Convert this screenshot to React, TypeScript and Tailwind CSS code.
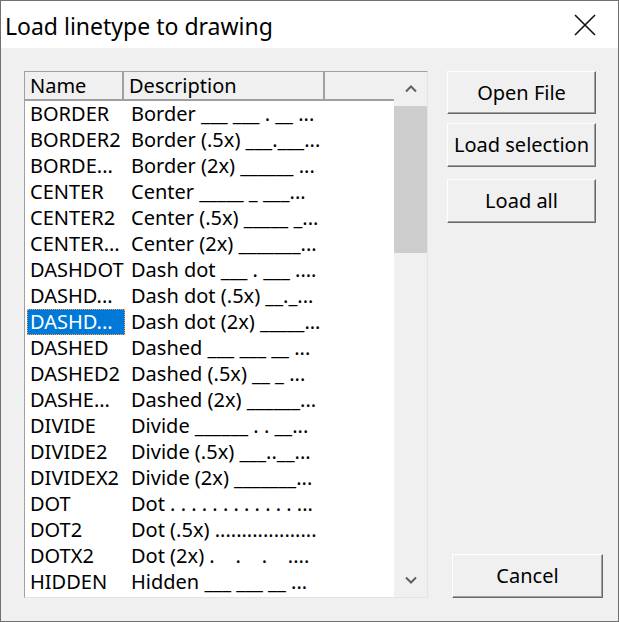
import React from "react";

// ─── Load linetype dialog ─────────────────────────────────────────────────────

const ROWS: [string, string][] = [
  ["BORDER", "Border ___ ___ . __ ..."],
  ["BORDER2", "Border (.5x) ___.___..."],
  ["BORDE...", "Border (2x) ______ ..."],
  ["CENTER", "Center _____ _ ___..."],
  ["CENTER2", "Center (.5x) _____ _..."],
  ["CENTER...", "Center (2x) _______..."],
  ["DASHDOT", "Dash dot ___ . ___ ...."],
  ["DASHD...", "Dash dot (.5x) __._..."],
  ["DASHD...", "Dash dot (2x) _____..."],
  ["DASHED", "Dashed ___ ___ __ ..."],
  ["DASHED2", "Dashed (.5x) __ _ ..."],
  ["DASHE...", "Dashed (2x) ______..."],
  ["DIVIDE", "Divide ______ . . __..."],
  ["DIVIDE2", "Divide (.5x) ___..__..."],
  ["DIVIDEX2", "Divide (2x) _______..."],
  ["DOT", "Dot . . . . . . . . . . . . ..."],
  ["DOT2", "Dot (.5x) ..................."],
  ["DOTX2", "Dot (2x) .    .    .    ...."],
  ["HIDDEN", "Hidden ___ ___ __ ..."],
];

const SELECTED = 8;

function Button({ label, className = "" }: { label: string; className?: string }) {
  return (
    <button
      className={
        "flex items-center justify-center bg-[#f0f0f0] text-black border border-t-white border-l-white border-b-[#696969] border-r-[#696969] shadow-[inset_-1px_-1px_0_#a0a0a0] " +
        className
      }
    >
      {label}
    </button>
  );
}

function Chevron({ down }: { down?: boolean }) {
  return (
    <svg width="12" height="8" viewBox="0 0 12 8">
      <path
        d={down ? "M1 1.5 L6 6.5 L11 1.5" : "M1 6.5 L6 1.5 L11 6.5"}
        fill="none"
        stroke="#606060"
        strokeWidth="2"
      />
    </svg>
  );
}

export default function App() {
  return (
    <div
      className="w-[619px] h-[622px] border border-[#707070] bg-[#f0f0f0] flex flex-col text-[20px] text-black"
      style={{ fontFamily: '"Noto Sans", "Open Sans", sans-serif' }}
    >
      {/* title bar */}
      <div className="h-[47px] bg-white flex items-center justify-between pl-[4px] pr-[22px] shrink-0">
        <span className="text-[23px] pt-[3px]">Load linetype to drawing</span>
        <svg width="22" height="22" viewBox="0 0 22 22">
          <path d="M1 1 L21 21 M21 1 L1 21" stroke="#111" strokeWidth="1.6" />
        </svg>
      </div>

      {/* client */}
      <div className="flex pl-[23px] pt-[23px]">
        {/* list box */}
        <div className="w-[404px] h-[527px] flex border border-t-[#a0a0a0] border-l-[#a0a0a0] border-r-[#e3e3e3] border-b-[#e3e3e3] bg-white">
          <div className="flex-1 flex flex-col overflow-hidden">
            <div className="h-[29px] flex bg-[#f0f0f0] border-b-2 border-[#a0a0a0] shrink-0">
              <div className="w-[99px] pl-[5px] leading-[27px] border-r-2 border-[#a0a0a0]">Name</div>
              <div className="w-[201px] pl-[5px] leading-[27px] border-r-2 border-[#a0a0a0]">Description</div>
              <div className="flex-1" />
            </div>
            {ROWS.map(([name, desc], i) => (
              <div key={i} className="h-[26px] flex items-center whitespace-pre">
                <div className="w-[100px] h-full flex items-center pl-[2px]">
                  <span
                    className={
                      i === SELECTED
                        ? "h-full w-[98px] flex items-center pl-[3px] bg-[#0078d7] text-white outline outline-1 outline-dotted outline-[#f5a34a] -outline-offset-1"
                        : "pl-[3px]"
                    }
                  >
                    {name}
                  </span>
                </div>
                <div className="w-[196px] pl-[6px] overflow-hidden">{desc}</div>
              </div>
            ))}
          </div>

          {/* scrollbar */}
          <div className="w-[33px] bg-[#f0f0f0] flex flex-col shrink-0">
            <div className="h-[34px] flex items-center justify-center">
              <Chevron />
            </div>
            <div className="h-[147px] bg-[#cdcdcd]" />
            <div className="flex-1" />
            <div className="h-[34px] flex items-center justify-center">
              <Chevron down />
            </div>
          </div>
        </div>

        {/* buttons */}
        <div className="flex flex-col ml-[19px] h-[527px]">
          <Button label="Open File" className="w-[149px] h-[43px]" />
          <Button label="Load selection" className="w-[149px] h-[44px] mt-[9px]" />
          <Button label="Load all" className="w-[149px] h-[44px] mt-[12px]" />
          <Button label="Cancel" className="w-[151px] h-[44px] mt-auto ml-[5px]" />
        </div>
      </div>
    </div>
  );
}
